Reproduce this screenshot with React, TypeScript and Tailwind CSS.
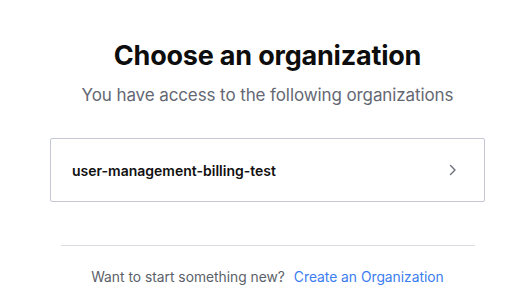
import React from "react";

export default function App() {
  return (
    <div
      className="w-[523px] h-[302px] bg-white flex flex-col items-center overflow-hidden pl-[12px]"
      style={{ fontFamily: "Inter, 'Noto Sans', sans-serif" }}
    >
      <h1 className="mt-[39px] text-[27px] leading-[34px] font-bold text-[#0d0d0d] tracking-[-0.2px]">
        Choose an organization
      </h1>
      <p className="mt-[11px] text-[17px] leading-[22px] text-[#646873] tracking-[-0.1px]">
        You have access to the following organizations
      </p>
      <button className="mt-[32px] w-[435px] h-[64px] border border-[#c5c8d4] rounded-[2px] flex items-center justify-between pl-[21px] pr-[27px] bg-white">
        <span className="text-[14px] font-semibold text-[#111111]">user-management-billing-test</span>
        <svg width="8" height="12" viewBox="0 0 8 12" fill="none">
          <path d="M1.5 1.5L6 6L1.5 10.5" stroke="#6b6f78" strokeWidth="1.4" strokeLinecap="round" strokeLinejoin="round" />
        </svg>
      </button>
      <div className="mt-[43px] w-[414px] h-px bg-[#dcdde3]" />
      <div className="mt-[21px] text-[13.8px] leading-[20px] flex gap-[9px]">
        <span className="text-[#5b5f69]">Want to start something new?</span>
        <a className="text-[#3b7cf0]">Create an Organization</a>
      </div>
    </div>
  );
}
